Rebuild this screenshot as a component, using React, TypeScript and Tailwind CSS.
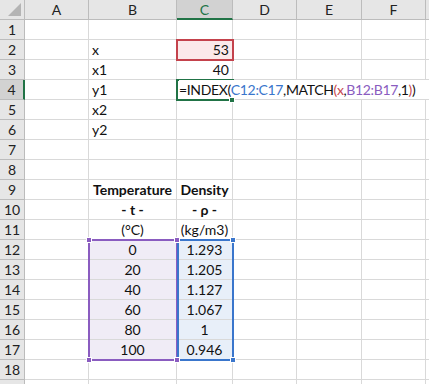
import React from "react";

type Cell = { text: React.ReactNode; align?: "left" | "right" | "center"; bold?: boolean };

const letters = ["A", "B", "C", "D", "E", "F", "G"];

const cells: Record<string, Cell> = {
  B2: { text: "x" },
  C2: { text: "53", align: "right" },
  B3: { text: "x1" },
  C3: { text: "40", align: "right" },
  B4: { text: "y1" },
  B5: { text: "x2" },
  B6: { text: "y2" },
  B9: { text: "Temperature", align: "center", bold: true },
  C9: { text: "Density", align: "center", bold: true },
  B10: { text: "- t -", align: "center", bold: true },
  C10: { text: "- ρ -", align: "center", bold: true },
  B11: { text: "(°C)", align: "center" },
  C11: { text: "(kg/m3)", align: "center" },
};

const temps = ["0", "20", "40", "60", "80", "100"];
const dens = ["1.293", "1.205", "1.127", "1.067", "1", "0.946"];
temps.forEach((t, i) => {
  cells["B" + (12 + i)] = { text: t, align: "center" };
  cells["C" + (12 + i)] = { text: dens[i], align: "center" };
});

const fillFor = (col: string, row: number) => {
  if (col === "C" && row === 2) return "bg-[#fbe9ea]";
  if (col === "B" && row >= 12 && row <= 17) return "bg-[#f0ecf6]";
  if (col === "C" && row >= 12 && row <= 17) return "bg-[#e8eff9]";
  return "bg-white";
};

const Formula = () => (
  <span className="absolute left-[2px] top-0 h-[19px] pr-[12px] bg-white flex items-center whitespace-nowrap tracking-[-0.35px] z-20">
    <span className="text-[#111]">=INDEX(</span>
    <span className="text-[#3a76cc]">C12:C17</span>
    <span className="text-[#111]">,MATCH</span>
    <span className="text-[#c8494f]">(</span>
    <span className="text-[#c8494f]">x</span>
    <span className="text-[#111]">,</span>
    <span className="text-[#8a5cc0]">B12:B17</span>
    <span className="text-[#111]">,1</span>
    <span className="text-[#c8494f]">)</span>
    <span className="text-[#111]">)</span>
  </span>
);

const Handle = ({ className }: { className: string }) => (
  <div className={"absolute w-[6px] h-[6px] border border-white z-30 " + className} />
);

export default function App() {
  const rows = Array.from({ length: 19 }, (_, i) => i + 1);
  return (
    <div
      className="relative w-[429px] h-[384px] overflow-hidden bg-white text-[14px] text-[#111]"
      style={{ fontFamily: "Lato, 'Liberation Sans', sans-serif" }}
    >
      <div className="grid grid-cols-[25px_64px_88px_56px_64px_65px_64px_64px] auto-rows-[20px]">
        {/* header row */}
        <div className="relative bg-[#e6e6e6] border-r border-b border-[#bcbcbc]">
          <div className="absolute right-[3px] bottom-[3px] w-0 h-0 border-l-[13px] border-l-transparent border-b-[13px] border-b-[#b4b4b4]" />
        </div>
        {letters.map((l) =>
          l === "C" ? (
            <div
              key={l}
              className="bg-[#d2d2d2] border-r border-[#bcbcbc] border-b-2 border-b-[#217346] text-[#217346] flex items-center justify-center"
            >
              {l}
            </div>
          ) : (
            <div
              key={l}
              className="bg-[#e6e6e6] border-r border-b border-[#bcbcbc] flex items-center justify-center text-[#222]"
            >
              {l === "G" ? "" : l}
            </div>
          )
        )}
        {rows.map((r) => (
          <React.Fragment key={r}>
            <div
              className={
                r === 4
                  ? "bg-[#d2d2d2] border-b border-[#bcbcbc] border-r-2 border-r-[#217346] flex items-center justify-center text-[#222]"
                  : "bg-[#e6e6e6] border-r border-b border-[#bcbcbc] flex items-center justify-center text-[#222]"
              }
            >
              {r < 19 ? r : ""}
            </div>
            {letters.map((l) => {
              const c = cells[l + r];
              const key = l + r;
              return (
                <div
                  key={key}
                  className={
                    "relative border-r border-b border-[#d9d9d9] flex items-center px-[3px] whitespace-nowrap " +
                    fillFor(l, r) +
                    (c?.align === "right" ? " justify-end" : c?.align === "center" ? " justify-center" : "") +
                    (c?.bold ? " font-bold" : "")
                  }
                >
                  {key === "C4" ? <Formula /> : c?.text}
                </div>
              );
            })}
          </React.Fragment>
        ))}
      </div>

      {/* selection overlays */}
      <div className="absolute left-[176px] top-[39px] w-[58px] h-[22px] border-2 border-[#c4424c] z-10" />
      <div className="absolute left-[176px] top-[79px] w-[58px] h-[22px] border-l-2 border-t-2 border-b-2 border-[#217346] z-10" />
      <Handle className="left-[229px] top-[97px] bg-[#217346]" />

      <div className="absolute left-[88px] top-[239px] w-[90px] h-[122px] border-2 border-[#8a5cc0] z-10" />
      <div className="absolute left-[177px] top-[239px] w-[57px] h-[122px] border-2 border-[#3a76cc] z-10" />
      <Handle className="left-[86px] top-[237px] bg-[#8a5cc0]" />
      <Handle className="left-[174px] top-[237px] bg-[#8a5cc0]" />
      <Handle className="left-[86px] top-[357px] bg-[#8a5cc0]" />
      <Handle className="left-[174px] top-[357px] bg-[#8a5cc0]" />
      <Handle className="left-[230px] top-[237px] bg-[#3a76cc]" />
      <Handle className="left-[230px] top-[357px] bg-[#3a76cc]" />
    </div>
  );
}
